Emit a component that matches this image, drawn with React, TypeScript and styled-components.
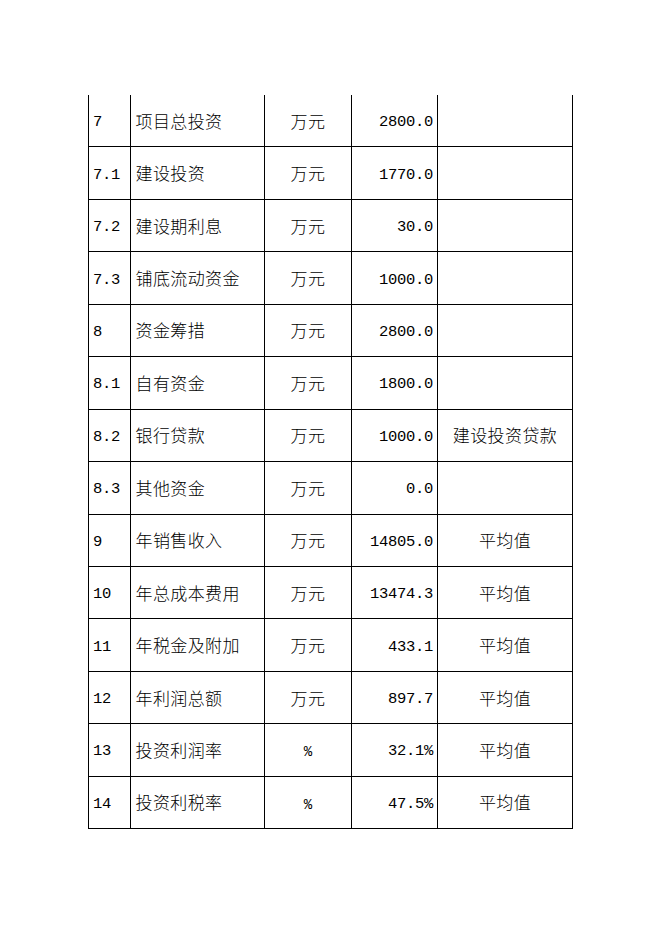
import React from "react";
import styled, { createGlobalStyle } from "styled-components";

const Global = createGlobalStyle`
  html, body { margin: 0; padding: 0; background: #fff; }
  body { width: 662px; height: 936px; overflow: hidden; }
`;

const Page = styled.div`
  width: 662px;
  height: 936px;
  box-sizing: border-box;
  padding: 95px 0 0 88px;
  background: #fff;
`;

const Grid = styled.div`
  display: grid;
  grid-template-columns: 41.5px 134.5px 87px 86px 136px;
  grid-auto-rows: 52.45px;
  width: max-content;
`;

const Cell = styled.div<{ $kind: "idx" | "name" | "unit" | "num" | "note"; $last?: boolean }>`
  box-sizing: border-box;
  border-left: 1px solid #000;
  border-bottom: 1px solid #000;
  ${(p) => (p.$last ? "border-right: 1px solid #000;" : "")}
  display: flex;
  align-items: center;
  color: #000;
  white-space: nowrap;
  overflow: hidden;
  justify-content: ${(p) =>
    p.$kind === "num" ? "flex-end" : p.$kind === "unit" || p.$kind === "note" ? "center" : "flex-start"};
  padding: ${(p) =>
    p.$kind === "num"
      ? "3px 4px 0 0"
      : p.$kind === "idx"
      ? "3px 0 0 4px"
      : p.$kind === "name"
      ? "0 0 1px 5px"
      : "0 0 1px 0"};
  font-family: ${(p) =>
    p.$kind === "num" || p.$kind === "idx"
      ? `"Liberation Mono", "DejaVu Sans Mono", monospace`
      : `"Noto Sans CJK SC", "Noto Sans", sans-serif`};
  font-size: ${(p) => (p.$kind === "num" || p.$kind === "idx" ? "15.5px" : "17px")};
  font-weight: ${(p) => (p.$kind === "num" || p.$kind === "idx" ? 400 : 300)};
  letter-spacing: ${(p) => (p.$kind === "num" || p.$kind === "idx" ? "-0.3px" : "0.4px")};
`;

const Percent = styled.span`
  font-family: "Liberation Mono", monospace;
  font-size: 14px;
  font-weight: 400;
  letter-spacing: 0;
  padding-top: 6px;
`;

type Row = [string, string, string, string, string];

const rows: Row[] = [
  ["7", "项目总投资", "万元", "2800.0", ""],
  ["7.1", "建设投资", "万元", "1770.0", ""],
  ["7.2", "建设期利息", "万元", "30.0", ""],
  ["7.3", "铺底流动资金", "万元", "1000.0", ""],
  ["8", "资金筹措", "万元", "2800.0", ""],
  ["8.1", "自有资金", "万元", "1800.0", ""],
  ["8.2", "银行贷款", "万元", "1000.0", "建设投资贷款"],
  ["8.3", "其他资金", "万元", "0.0", ""],
  ["9", "年销售收入", "万元", "14805.0", "平均值"],
  ["10", "年总成本费用", "万元", "13474.3", "平均值"],
  ["11", "年税金及附加", "万元", "433.1", "平均值"],
  ["12", "年利润总额", "万元", "897.7", "平均值"],
  ["13", "投资利润率", "%", "32.1%", "平均值"],
  ["14", "投资利税率", "%", "47.5%", "平均值"],
];

export default function App() {
  return (
    <>
      <Global />
      <Page>
        <Grid>
          {rows.map((r, i) => (
            <React.Fragment key={i}>
              <Cell $kind="idx">{r[0]}</Cell>
              <Cell $kind="name">{r[1]}</Cell>
              <Cell $kind="unit">{r[2] === "%" ? <Percent>%</Percent> : r[2]}</Cell>
              <Cell $kind="num">{r[3]}</Cell>
              <Cell $kind="note" $last>
                {r[4]}
              </Cell>
            </React.Fragment>
          ))}
        </Grid>
      </Page>
    </>
  );
}
